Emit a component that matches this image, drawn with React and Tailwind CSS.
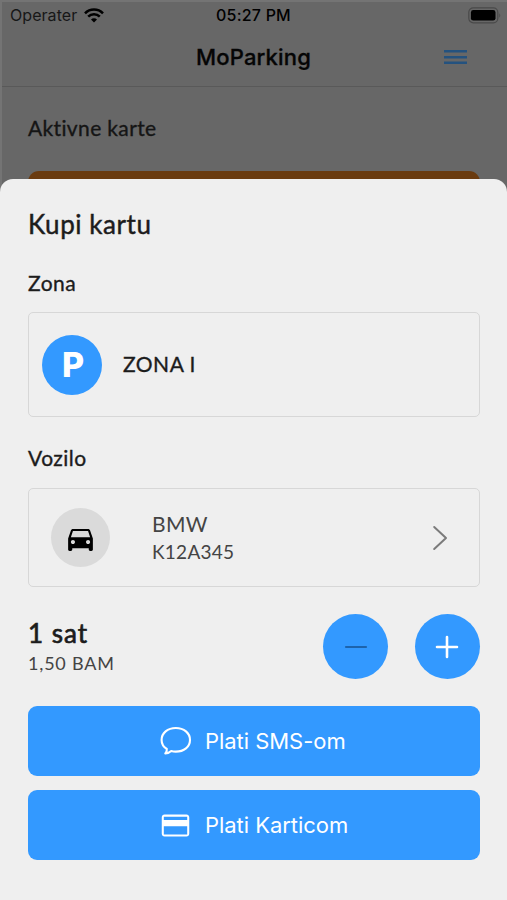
const lato = "font-['Lato',sans-serif]";
const inter = "font-['Inter',sans-serif]";

function StatusBar() {
  return (
    <div className="flex h-[26px] items-center px-[10px] text-[16px] leading-none text-black">
      <div className="flex flex-1 items-center gap-[7px]">
        <span className="tracking-[0.06px] text-[#171717]">Operater</span>
        <svg width="20" height="15" viewBox="0 0 20 15" fill="none" stroke="#000" strokeWidth="2.6">
          <path d="M1 5.3a12.7 12.7 0 0 1 18 0" />
          <path d="M4.2 8.6a8.2 8.2 0 0 1 11.6 0" />
          <path d="M10 14.5l-3-3.1a4.2 4.2 0 0 1 6 0z" fill="#000" stroke="none" />
        </svg>
      </div>
      <span className="text-[16px] font-medium tracking-[0.2px]">05:27 PM</span>
      <div className="flex flex-1 justify-end">
        <svg className="-mr-[5px]" width="34" height="17" viewBox="0 0 34 17">
          <rect x="0.8" y="0.8" width="29" height="15" rx="4.5" fill="none" stroke="#4a4a4a" strokeWidth="1.2" />
          <rect x="2.900" y="3" width="24.600" height="10.600" rx="2.400" fill="#000" />
          <path d="M31.3 6.2q1.900 2.200 0 4.500z" fill="#4a4a4a" />
        </svg>
      </div>
    </div>
  );
}

function Header() {
  return (
    <div className="grid h-[59px] grid-cols-[1fr_auto_1fr] items-center border-b border-[#595959] pr-[40px]">
      <span />
      <h1 className="ml-[40px] text-[22px] font-medium leading-none tracking-[0.16px] text-[#050505] [-webkit-text-stroke:0.3px_#050505]">MoParking</h1>
      <svg className="justify-self-end" width="23" height="16" viewBox="0 0 23 16" stroke="#24527f" strokeWidth="2.4">
        <path d="M0 2.200h23M0 8.200h23M0 13.700h23" />
      </svg>
    </div>
  );
}

function Card({ className, children }) {
  return (
    <div className={"flex items-center rounded-[5px] border border-[#d7d7d7] " + className}>{children}</div>
  );
}

function Round({ className, children }) {
  return <div className={"flex shrink-0 items-center justify-center rounded-full " + className}>{children}</div>;
}

function PayButton({ icon, label, className }) {
  return (
    <button className={"flex h-[70px] w-full items-center rounded-[9px] bg-[#3399ff] pl-[132px] text-[22px] leading-none tracking-[-0.04px] text-white " + className + " " + inter}>
      {icon}
      {label}
    </button>
  );
}

export default function App() {
  return (
    <div className={"flex h-[900px] w-[507px] flex-col overflow-hidden bg-[#676767] " + lato}>
      <div className="h-[191px] shrink-0 overflow-hidden border-l-2 border-t-2 border-[#747474]">
        <div className={"-ml-[2px] " + inter}>
          <StatusBar />
          <Header />
        </div>
        <div className="pl-[26px] pr-[27px] pt-[27px]">
          <h2 className="text-[21px] leading-[28px] tracking-[0.36px] text-[#151515] [-webkit-text-stroke:0.35px_#151515]">Aktivne karte</h2>
          <div className="mt-[29px] h-[40px] rounded-[11px] bg-[#6a3b10]" />
        </div>
      </div>
      <main className="relative -mt-[12px] flex-1 rounded-t-[13px] bg-[#efefef] pl-[28px] pr-[27px] pt-[28px] text-[#1c1c1c]">
        <h2 className="text-[26px] leading-[34px] tracking-[0.55px] [-webkit-text-stroke:0.45px_#1c1c1c]">Kupi kartu</h2>
        <h3 className="mt-[29px] text-[21px] leading-[26px] tracking-[0.5px] [-webkit-text-stroke:0.35px_#1c1c1c]">Zona</h3>
        <Card className="mt-[16px] h-[105px] pl-[13px]">
          <Round className="h-[60px] w-[60px] bg-[#3399ff]">
            <span className={"ml-[2px] text-[34px] font-extrabold leading-none text-white " + inter}>P</span>
          </Round>
          <span className="-mt-[2px] ml-[21px] text-[21px] leading-none tracking-[0.5px] [-webkit-text-stroke:0.35px_#1c1c1c]">ZONA I</span>
        </Card>
        <h3 className="mt-[28px] text-[21px] leading-[26px] tracking-[0.5px] [-webkit-text-stroke:0.35px_#1c1c1c]">Vozilo</h3>
        <Card className="mt-[17px] h-[99px] pl-[22px] pr-[31px]">
          <Round className="-mt-px h-[59px] w-[59px] bg-[#dadada]">
            <svg className="mt-[2px]" width="33" height="33" viewBox="0 0 24 24" fill="#000">
              <path d="M18.92 6.01C18.72 5.42 18.16 5 17.5 5h-11c-.66 0-1.21.42-1.42 1.01L3 12v8c0 .55.45 1 1 1h1c.55 0 1-.45 1-1v-1h12v1c0 .55.45 1 1 1h1c.55 0 1-.45 1-1v-8l-2.08-5.99zM6.5 16c-.83 0-1.5-.67-1.5-1.5S5.67 13 6.5 13s1.5.67 1.5 1.5S7.33 16 6.5 16zm11 0c-.83 0-1.5-.67-1.5-1.5s.67-1.5 1.5-1.5 1.5.67 1.5 1.5-.67 1.5-1.5 1.5zM5 11l1.500-4.500h11L19 11H5z" />
            </svg>
          </Round>
          <div className="ml-[42px] flex-1 text-[#444]">
            <div className="text-[21px] leading-[28px] tracking-[0.3px]">BMW</div>
            <div className="text-[19px] leading-[27px] tracking-[0.25px]">K12A345</div>
          </div>
          <svg width="16" height="26" viewBox="0 0 16 26" fill="none" stroke="#7b7b7b" strokeWidth="2" strokeLinecap="round" strokeLinejoin="round">
            <path d="M2.200 2l11.800 11L2.200 24" />
          </svg>
        </Card>
        <div className="mt-[27px] flex h-[65px] items-center">
          <div className="flex-1">
            <div className="text-[26px] leading-[34px] tracking-[1px] [-webkit-text-stroke:0.7px_#1c1c1c]">1 sat</div>
            <div className="text-[18px] leading-[27px] tracking-[0.8px] text-[#444]">1,50 BAM</div>
          </div>
          <Round className="h-[65px] w-[65px] bg-[#3399ff]">
            <svg width="24" height="24" viewBox="0 0 24 24" stroke="#1d63ac" strokeWidth="2.2" strokeLinecap="round">
              <path d="M2 12h20" />
            </svg>
          </Round>
          <Round className="ml-[27px] h-[65px] w-[65px] bg-[#3399ff]">
            <svg className="-ml-px" width="24" height="24" viewBox="0 0 24 24" stroke="#fff" strokeWidth="2.6" strokeLinecap="round">
              <path d="M2 12h20M12 2v20" />
            </svg>
          </Round>
        </div>
        <PayButton
          className="mt-[27px]"
          label="Plati SMS-om"
          icon={
            <svg className="mr-[13px]" width="32" height="32" viewBox="0 0 32 32" fill="none" stroke="#fff" strokeWidth="2.1" strokeLinejoin="round">
              <path d="M15.800 3c8.200 0 14.200 5 14.200 11.900s-6 11.700-14.200 11.700c-1.700 0-3.200-.2-4.600-.6-1.700 1.600-3.700 2.400-5.900 2.500 1.200-1.200 1.700-2.900 1.500-4.600C3.600 21.900 1.600 18.700 1.600 14.900 1.600 8 7.600 3 15.800 3z" />
            </svg>
          }
        />
        <PayButton
          className="mt-[14px]"
          label="Plati Karticom"
          icon={
            <svg className="-ml-px mr-[13px]" width="33" height="33" viewBox="0 0 24 24" fill="#fff">
              <path d="M20 4H4c-1.110 0-1.990.89-1.990 2L2 18c0 1.110.89 2 2 2h16c1.110 0 2-.89 2-2V6c0-1.110-.89-2-2-2zm.5 14.500h-17V12.500h17v6zm0-10.500h-17V5.700h17V8z" />
            </svg>
          }
        />
      </main>
    </div>
  );
}
